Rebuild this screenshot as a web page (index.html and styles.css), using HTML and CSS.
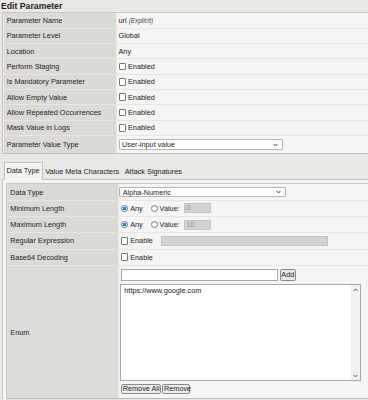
FILE: index.html
```html
<!DOCTYPE html>
<html>
	<head>
		<meta charset="UTF-8">
		<title>Edit Parameter</title>
		<link rel="stylesheet" href="styles.css">
	</head>

	<body>
		<div class="title">Edit Parameter</div>

		<div class="props">
			<div class="row">
				<div class="lbl">Parameter Name</div>
				<div class="val">url&nbsp;<i class="note">(Explicit)</i></div>
			</div>
			<div class="row">
				<div class="lbl">Parameter Level</div>
				<div class="val">Global</div>
			</div>
			<div class="row">
				<div class="lbl">Location</div>
				<div class="val">Any</div>
			</div>
			<div class="row">
				<div class="lbl">Perform Staging</div>
				<div class="val"><span class="cb"></span>Enabled</div>
			</div>
			<div class="row">
				<div class="lbl">Is Mandatory Parameter</div>
				<div class="val"><span class="cb"></span>Enabled</div>
			</div>
			<div class="row">
				<div class="lbl">Allow Empty Value</div>
				<div class="val"><span class="cb"></span>Enabled</div>
			</div>
			<div class="row">
				<div class="lbl">Allow Repeated Occurrences</div>
				<div class="val"><span class="cb"></span>Enabled</div>
			</div>
			<div class="row">
				<div class="lbl">Mask Value in Logs</div>
				<div class="val"><span class="cb"></span>Enabled</div>
			</div>
			<div class="row tall">
				<div class="lbl">Parameter Value Type</div>
				<div class="val">
					<div class="select sel-type">
						<span>User-input value</span>
						<svg width="5" height="4" viewBox="0 0 5 4"><polyline points="0.5,0.8 2.5,3 4.5,0.8" fill="none" stroke="#444" stroke-width="1"/></svg>
					</div>
				</div>
			</div>
		</div>

		<div class="tabs">
			<span class="tab on">Data Type</span>
			<span class="tab">Value Meta Characters</span>
			<span class="tab">Attack Signatures</span>
		</div>

		<div class="panel">
			<div class="props inner">
				<div class="row">
					<div class="lbl">Data Type</div>
					<div class="val">
						<div class="select sel-data">
							<span>Alpha-Numeric</span>
							<svg width="5" height="4" viewBox="0 0 5 4"><polyline points="0.5,0.8 2.5,3 4.5,0.8" fill="none" stroke="#444" stroke-width="1"/></svg>
						</div>
					</div>
				</div>
				<div class="row">
					<div class="lbl">Minimum Length</div>
					<div class="val">
						<span class="radio on"></span><span class="any">Any</span>
						<span class="radio"></span><span class="vlabel">Value:</span>
						<span class="field off num">0</span>
					</div>
				</div>
				<div class="row">
					<div class="lbl">Maximum Length</div>
					<div class="val">
						<span class="radio on"></span><span class="any">Any</span>
						<span class="radio"></span><span class="vlabel">Value:</span>
						<span class="field off num">10</span>
					</div>
				</div>
				<div class="row">
					<div class="lbl">Regular Expression</div>
					<div class="val">
						<span class="cb"></span><span class="enable">Enable</span>
						<span class="field off regex"></span>
					</div>
				</div>
				<div class="row">
					<div class="lbl">Base64 Decoding</div>
					<div class="val"><span class="cb"></span>Enable</div>
				</div>
				<div class="row enum">
					<div class="lbl">Enum</div>
					<div class="val">
						<div class="add-line">
							<span class="field enum-input"></span>
							<span class="btn">Add</span>
						</div>
						<div class="listbox">
							<div class="items">https://www.google.com</div>
							<div class="scroll">
								<svg width="5" height="4" viewBox="0 0 5 4"><polyline points="0.5,3 2.5,0.8 4.5,3" fill="none" stroke="#555" stroke-width="0.9"/></svg>
								<svg width="5" height="4" viewBox="0 0 5 4"><polyline points="0.5,0.8 2.5,3 4.5,0.8" fill="none" stroke="#555" stroke-width="0.9"/></svg>
							</div>
						</div>
						<div class="btn-line">
							<span class="btn">Remove All</span>
							<span class="btn">Remove</span>
						</div>
					</div>
				</div>
			</div>
		</div>
	</body>
</html>
```

FILE: styles.css
```css
body {
	margin: 0;
	width: 368px;
	height: 400px;
	overflow: hidden;
	background: #e9e8e4;
	font-family: "Liberation Sans", Arial, sans-serif;
	font-size: 7.3px;
	color: #222;
}

.title {
	height: 12.3px;
	line-height: 12.3px;
	padding-left: 1px;
	font-size: 8.7px;
	font-weight: bold;
}

.props {
	margin-left: 2px;
	padding-left: 1px;
	border-left: 1px solid #c6c4bf;
	border-top: 1px solid #c9c8c4;
	border-bottom: 1px solid #bdbcb8;
	background: #eeede9;
}

.row {
	display: flex;
	height: 15.33px;
	box-sizing: border-box;
	border-bottom: 1px solid #e7e6e2;
}

.row:last-child {
	border-bottom: none;
}

.row.tall {
	height: 17.3px;
}

.lbl {
	width: 112px;
	flex: none;
	box-sizing: border-box;
	padding-left: 2.7px;
	display: flex;
	align-items: center;
	background: #dcdad5;
}

.val {
	flex: 1;
	display: flex;
	align-items: center;
	padding-left: 1.5px;
	border-left: 1px solid #ebeae6;
	background: #f6f5f3;
	white-space: nowrap;
}

.note {
	font-size: 6.4px;
	color: #444;
}

.cb {
	width: 7.5px;
	height: 7.5px;
	box-sizing: border-box;
	border: 1px solid #767676;
	border-radius: 1px;
	background: #fff;
	margin-right: 2px;
	flex: none;
}

.select {
	height: 11.3px;
	box-sizing: border-box;
	border: 1px solid #b4b4b4;
	border-radius: 1px;
	background: #fff;
	display: flex;
	align-items: center;
	justify-content: space-between;
	padding: 0 4px 0 2.5px;
}

.sel-type {
	width: 164px;
}

.sel-data {
	width: 166.7px;
	height: 10.7px;
}

/* tabs */
.tabs {
	height: 24.5px;
	box-sizing: border-box;
	display: flex;
	align-items: flex-end;
	padding-left: 4px;
}

.tab {
	height: 16.5px;
	line-height: 16.5px;
	padding: 0 2px 0 1.5px;
	box-sizing: border-box;
	border: 1px solid transparent;
	border-bottom: none;
	margin-bottom: -1px;
}

.tab.on {
	background: #f5f4f1;
	border-color: #c2c1bd;
	height: 17.5px;
}

.panel {
	margin-left: 2px;
	padding: 3.7px 0 0 3px;
	border-left: 1px solid #c6c4bf;
	border-top: 1px solid #c2c1bd;
	background: #f5f4f1;
}

.inner {
	margin-left: 0;
	padding-left: 0;
}

.inner .row {
	height: 16.3px;
}

.inner .lbl {
	width: 110.5px;
	padding-left: 3.3px;
}

.inner .val {
	padding-left: 2.2px;
}

.inner .sel-data {
	margin-left: -1.5px;
}

.radio {
	width: 7px;
	height: 7px;
	box-sizing: border-box;
	border: 1px solid #767676;
	border-radius: 50%;
	background: #fff;
	flex: none;
}

.radio.on {
	border-color: #2f78d6;
	background: radial-gradient(circle, #2f78d6 0 1.6px, #fff 2px);
}

.any {
	margin-left: 2.5px;
	margin-right: 8px;
}

.vlabel {
	margin-left: 1.8px;
	margin-right: 4px;
}

.field {
	height: 10px;
	box-sizing: border-box;
	border: 1px solid #a8a8a8;
	background: #fff;
	padding-left: 1.5px;
	line-height: 8px;
}

.field.off {
	background: #d3d3d3;
	border-color: #c4c4c4;
	color: #8f8f8f;
}

.num {
	width: 27px;
}

.enable {
	margin-right: 8px;
}

.regex {
	width: 167px;
	height: 9.7px;
}

.inner .row.enum {
	height: 132.3px;
}

.enum .lbl {
	background: #dedcd8;
}

.enum .val {
	flex-direction: column;
	align-items: flex-start;
	justify-content: flex-start;
	padding-top: 3.5px;
}

.add-line {
	display: flex;
	align-items: center;
	height: 11.3px;
}

.enum-input {
	width: 157.6px;
	height: 11.3px;
	margin-right: 1.7px;
}

.btn {
	height: 10.3px;
	box-sizing: border-box;
	border: 1px solid #8a8a8a;
	border-radius: 2px;
	background: #ececec;
	padding: 0 1px;
	line-height: 8.3px;
	display: inline-block;
}

.add-line .btn {
	height: 11.3px;
	line-height: 9.3px;
	width: 15.7px;
	text-align: center;
	padding: 0;
}

.listbox {
	width: 240.7px;
	height: 97.3px;
	margin-top: 3px;
	margin-left: -0.4px;
	box-sizing: border-box;
	border: 1px solid #a8a8a8;
	background: #fff;
	display: flex;
}

.items {
	flex: 1;
	padding: 2px 0 0 3px;
	line-height: 8px;
}

.scroll {
	width: 8.5px;
	background: #f1f1f1;
	display: flex;
	flex-direction: column;
	justify-content: space-between;
	align-items: center;
	padding: 3px 0 2px;
}

.btn-line {
	display: flex;
	gap: 1.3px;
	margin-top: 3px;
}

.btn-line .btn:first-child {
	width: 40px;
}

.btn-line .btn:last-child {
	width: 28px;
}
```
